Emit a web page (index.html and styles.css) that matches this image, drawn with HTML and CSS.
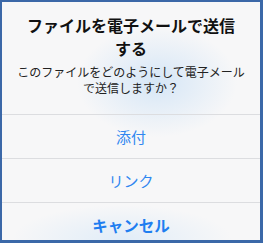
FILE: index.html
```html
<!DOCTYPE html>
<html lang="ja">
<head>
<meta charset="utf-8">
<link rel="stylesheet" href="styles.css">
</head>
<body>
<div class="frame">
  <div class="sheet">
    <div class="header">
      <div class="title">ファイルを電子メールで送信する</div>
      <div class="message">このファイルをどのようにして電子メールで送信しますか？</div>
    </div>
    <div class="action">添付</div>
    <div class="action">リンク</div>
    <div class="action cancel">キャンセル</div>
  </div>
</div>
</body>
</html>
```
FILE: styles.css
```css
html, body {
  margin: 0;
  padding: 0;
}
body {
  width: 263px;
  height: 243px;
  overflow: hidden;
  font-family: "Noto Sans CJK JP", "Noto Sans", sans-serif;
}
.frame {
  box-sizing: border-box;
  width: 263px;
  height: 243px;
  border-style: solid;
  border-color: #3b68a8;
  border-width: 2px 3px 3px 2px;
  overflow: hidden;
}
.sheet {
  height: 100%;
  background:
    radial-gradient(ellipse 80px 55px at 155px 80px, rgba(205, 226, 246, 0.8), rgba(205, 226, 246, 0) 100%),
    radial-gradient(ellipse 110px 35px at 120px 238px, rgba(215, 232, 248, 0.7), rgba(215, 232, 248, 0) 100%),
    #f7f7f8;
}
.header {
  padding: 12px 14px 18px;
  text-align: center;
}
.title {
  font-size: 16px;
  font-weight: 700;
  line-height: 23px;
  color: #111;
  padding: 0 10px;
}
.message {
  margin-top: 4px;
  font-size: 12px;
  line-height: 16px;
  color: #222;
}
.action {
  box-sizing: border-box;
  height: 44px;
  border-top: 1px solid #dcdde0;
  display: flex;
  align-items: center;
  justify-content: center;
  font-size: 15px;
  color: #2f86f0;
}
.cancel {
  font-weight: 700;
  font-size: 15.5px;
  color: #1f7ef0;
}
```
